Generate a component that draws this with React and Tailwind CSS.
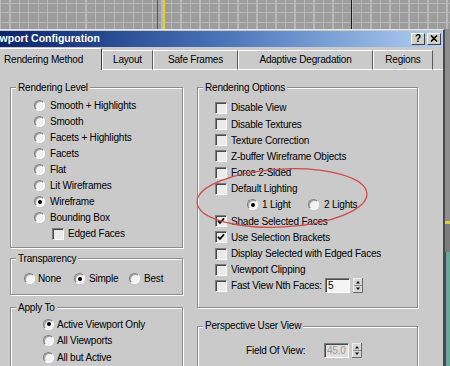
import React from "react";

const levels = [
  "Smooth + Highlights",
  "Smooth",
  "Facets + Highlights",
  "Facets",
  "Flat",
  "Lit Wireframes",
  "Wireframe",
  "Bounding Box",
];

const options = [
  { label: "Disable View" },
  { label: "Disable Textures" },
  { label: "Texture Correction" },
  { label: "Z-buffer Wireframe Objects" },
  { label: "Force 2-Sided" },
  { label: "Default Lighting" },
];

const options2 = [
  { label: "Shade Selected Faces", checked: true },
  { label: "Use Selection Brackets", checked: true },
  { label: "Display Selected with Edged Faces" },
  { label: "Viewport Clipping" },
];

const tabs = [
  { name: "Layout", w: "w-[51px]" },
  { name: "Safe Frames", w: "w-[85px]" },
  { name: "Adaptive Degradation", w: "w-[135px]" },
  { name: "Regions", w: "w-[60px]" },
];

function Radio({ checked, label, gap = "ml-[4px]" }) {
  return (
    <span className="flex items-center">
      <span className="flex h-[11px] w-[11px] shrink-0 items-center justify-center rounded-full border border-t-[#7c7c7c] border-l-[#7c7c7c] border-r-white border-b-white bg-[#f2f2f2] shadow-[inset_1px_1px_0_#a4a4a4]">
        {checked && <span className="h-[4px] w-[4px] rounded-full bg-black" />}
      </span>
      <span className={gap}>{label}</span>
    </span>
  );
}

function Check({ checked, label }) {
  return (
    <span className="flex items-center">
      <span className="flex h-[12px] w-[12px] shrink-0 items-center justify-center border border-t-[#7c7c7c] border-l-[#7c7c7c] border-r-white border-b-white bg-[#ebebeb] shadow-[inset_1px_1px_0_#4a4a4a]">
        {checked && (
          <svg width="8" height="8" viewBox="0 0 8 8">
            <path d="M1 3.8 L3 6 L7 1.4" fill="none" stroke="#000" strokeWidth="1.7" />
          </svg>
        )}
      </span>
      <span className="ml-[4px]">{label}</span>
    </span>
  );
}

function Group({ title, className = "", children }) {
  return (
    <fieldset className={`border border-[#8c8c8c] shadow-[1px_1px_0_#fff,inset_1px_1px_0_#fff] ${className}`}>
      <legend className="ml-[5px] bg-[#cacaca] px-[2px] leading-[12px]">{title}</legend>
      {children}
    </fieldset>
  );
}

function Spinner() {
  return (
    <svg width="10" height="15" viewBox="0 0 10 15" className="ml-[3px] shrink-0">
      <rect x="0" y="0" width="10" height="15" fill="#d6d6d6" />
      <path d="M0 15 V0 H10" fill="none" stroke="#fff" strokeWidth="1" />
      <path d="M0 14.5 H9.5 V0" fill="none" stroke="#6a6a6a" strokeWidth="1" />
      <path d="M1 7.5 H9" stroke="#8a8a8a" strokeWidth="1" />
      <polygon points="3,5.5 5,3 7,5.5" fill="#000" />
      <polygon points="3,9.5 5,12 7,9.5" fill="#000" />
    </svg>
  );
}

function Field({ value, disabled }) {
  return (
    <span
      className={`flex h-[15px] w-[25px] shrink-0 items-center border border-t-[#7c7c7c] border-l-[#7c7c7c] border-r-white border-b-white pl-[2px] shadow-[inset_1px_1px_0_#4a4a4a] ${
        disabled ? "bg-[#dedede] text-[#9a9a9a]" : "bg-[#f4f4f4] text-black"
      }`}
    >
      {value}
    </span>
  );
}

export default function App() {
  return (
    <div className="relative h-[366px] w-[450px] overflow-hidden bg-[#9d9d9d] bg-[image:repeating-linear-gradient(90deg,#b9b9b9_0_1px,transparent_1px_9.5px),repeating-linear-gradient(180deg,transparent_0_3px,#b9b9b9_3px_4px,transparent_4px_9.5px)] font-['Liberation_Sans',Arial,sans-serif] text-[10px] tracking-[-0.2px] text-black">
      {/* viewport strip above the dialog */}
      <div className="flex h-[29px]">
        <div className="w-[157px]" />
        <div className="w-[1px] bg-[#5a5a5a]" />
        <div className="w-[5px]" />
        <div className="w-[2px] bg-[#e2d21a]" />
        <div className="w-[186px]" />
        <div className="w-[1px] bg-[#1a1a1a]" />
      </div>

      <div className="flex h-[337px]">
        {/* dialog */}
        <div className="flex w-[445px] flex-col overflow-hidden border-t border-r-2 border-t-[#e6e6e6] border-r-[#4a4a4a] bg-[#cacaca] pt-[1px]">
          {/* title bar */}
          <div className="flex h-[16px] items-center justify-between bg-linear-to-r from-[#0a246a] via-[#4a74b8] to-[#b2d0f2] pr-[2px]">
            <span className="ml-[-16px] text-[10.5px] font-bold tracking-normal text-white">Viewport Configuration</span>
            <div className="flex gap-[2px]">
              <span className="flex h-[12px] w-[14px] items-center justify-center border border-t-white border-l-white border-r-[#404040] border-b-[#404040] bg-[#d4d0c8] text-[10px] font-bold leading-none">?</span>
              <span className="flex h-[12px] w-[14px] items-center justify-center border border-t-white border-l-white border-r-[#404040] border-b-[#404040] bg-[#d4d0c8]">
                <svg width="8" height="7" viewBox="0 0 8 7">
                  <path d="M1 0.5 L7 6.5 M7 0.5 L1 6.5" stroke="#000" strokeWidth="1.6" />
                </svg>
              </span>
            </div>
          </div>

          {/* tabs */}
          <div className="mt-[1px] flex h-[22px] items-end">
            <div className="flex h-[22px] w-[102px] items-center border-t border-r border-t-white border-r-[#3a3a3a] pl-[4px]">
              Rendering Method
            </div>
            {tabs.map((t) => (
              <div
                key={t.name}
                className={`flex h-[20px] ${t.w} items-center justify-center border border-t-white border-l-white border-r-[#5a5a5a] border-b-white`}
              >
                {t.name}
              </div>
            ))}
            <div className="flex-1 border-b border-b-white" />
          </div>

          {/* tab page */}
          <div className="flex gap-[14px] pt-[12px] pl-[10px]">
            {/* left column */}
            <div className="flex w-[173px] flex-col">
              <Group title="Rendering Level">
                <div className="flex flex-col pt-[4px] pb-[5px] pl-[23px]">
                  {levels.map((l) => (
                    <div key={l} className="flex h-[16px] items-center">
                      <Radio label={l} checked={l === "Wireframe"} gap="ml-[5px]" />
                    </div>
                  ))}
                  <div className="flex h-[16px] items-center pl-[18px]">
                    <Check label="Edged Faces" />
                  </div>
                </div>
              </Group>

              <Group title="Transparency" className="mt-[5px]">
                <div className="mt-[6px] mb-[7px] flex h-[16px] items-center pl-[13px]">
                  <span className="w-[50px]"><Radio label="None" gap="ml-[3px]" /></span>
                  <span className="w-[55px]"><Radio label="Simple" checked gap="ml-[4px]" /></span>
                  <Radio label="Best" gap="ml-[4px]" />
                </div>
              </Group>

              <Group title="Apply To" className="mt-[7px]">
                <div className="flex flex-col pt-[2px] pb-[10px] pl-[32px]">
                  <div className="flex h-[16.5px] items-center"><Radio label="Active Viewport Only" checked gap="ml-[3px]" /></div>
                  <div className="flex h-[16.5px] items-center"><Radio label="All Viewports" gap="ml-[3px]" /></div>
                  <div className="flex h-[16.5px] items-center"><Radio label="All but Active" gap="ml-[3px]" /></div>
                </div>
              </Group>
            </div>

            {/* right column */}
            <div className="flex w-[221px] flex-col">
              <Group title="Rendering Options">
                <div className="flex flex-col pt-[6px] pb-[13px] pl-[17px]">
                  {options.map((o) => (
                    <div key={o.label} className="flex h-[16.2px] items-center">
                      <Check label={o.label} checked={o.checked} />
                    </div>
                  ))}
                  <div className="flex h-[16.2px] items-center pl-[32px]">
                    <span className="w-[61px]"><Radio label="1 Light" checked gap="ml-[4px]" /></span>
                    <Radio label="2 Lights" gap="ml-[5px]" />
                  </div>
                  {options2.map((o) => (
                    <div key={o.label} className="flex h-[16.2px] items-center">
                      <Check label={o.label} checked={o.checked} />
                    </div>
                  ))}
                  <div className="flex h-[16.2px] items-center">
                    <span className="w-[110px]"><Check label="Fast View Nth Faces:" /></span>
                    <Field value="5" />
                    <Spinner />
                  </div>
                </div>
              </Group>

              <Group title="Perspective User View" className="mt-[12px]">
                <div className="mt-[10px] mb-[10px] flex h-[17px] items-center pl-[48px]">
                  <span className="w-[78px]">Field Of View:</span>
                  <Field value="45.0" disabled />
                  <Spinner />
                </div>
              </Group>
            </div>
          </div>
        </div>

        {/* edge of the viewports beside the dialog */}
        <div className="flex w-[5px] flex-col">
          <div className="h-[192px] bg-[#8e8e8e]" />
          <div className="h-[3px] bg-[#d8cf3a]" />
          <div className="h-[28px] bg-[#7c7c7c]" />
          <div className="flex-1 border-l border-l-[#4a4a4a] bg-[#67a89b]" />
        </div>
      </div>

      {/* hand-drawn annotation */}
      <svg className="pointer-events-none absolute left-[190px] top-[160px]" width="190" height="80" viewBox="0 0 190 80">
        <ellipse cx="92" cy="38" rx="85" ry="29" transform="rotate(-3 92 38)" fill="none" stroke="#d24848" strokeWidth="1.3" />
      </svg>
    </div>
  );
}
